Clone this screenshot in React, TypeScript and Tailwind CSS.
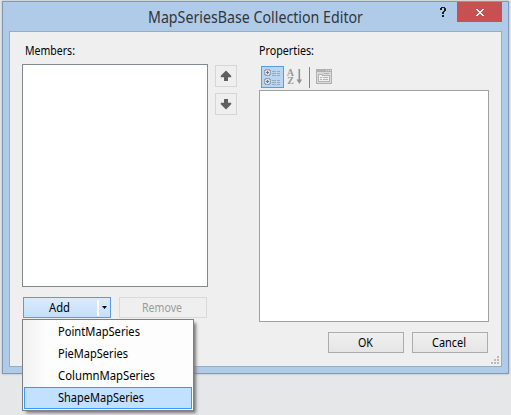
import type { ReactNode } from "react";

const seriesTypes = ["PointMapSeries", "PieMapSeries", "ColumnMapSeries", "ShapeMapSeries"];
const widths = [82, 70, 97, 86];

function Label({ text, width, size = 12 }: { text: string; width: number; size?: number }) {
  return (
    <svg width={width} height={size + 6} className="block shrink-0 overflow-visible" aria-label={text}>
      <text x="0" y={size} fontSize={size} textLength={width} lengthAdjust="spacingAndGlyphs" fill="currentColor">
        {text}
      </text>
    </svg>
  );
}

function ArrowButton({ down = false }: { down?: boolean }) {
  return (
    <button className="flex h-[22px] w-[22px] items-center justify-center border border-[#d6d6d6] bg-[#efefef]">
      <svg width="12" height="12" viewBox="0 0 12 12" fill="#606060" className={down ? "rotate-180" : ""}>
        <path d="M6 0.5 L11.2 5.7 V7.2 H8 V11 H4 V7.2 H0.8 V5.7 Z" />
      </svg>
    </button>
  );
}

function DialogButton({ children }: { children: ReactNode }) {
  return (
    <button className="flex h-[21px] w-[76px] items-center justify-center border border-[#acacac] bg-linear-to-b from-[#f0f0f0] to-[#e5e5e5] pr-[2px]">
      {children}
    </button>
  );
}

function CategoryIcon() {
  return (
    <svg width="17" height="16" viewBox="0 0 17 16" fill="none" shapeRendering="crispEdges">
      <path d="M1.5 .5h4v1h1v4h-1v1h-4v-1h-1v-4h1zM1.5 9.5h4v1h1v4h-1v1h-4v-1h-1v-4h1z" stroke="#93a4b5" fill="#d3e0ec" />
      <path d="M2 3.5h3M3.5 2v3M2 12.5h3M3.5 11v3" stroke="#647585" />
      <path d="M8 2.5h4M8 4.5h4M8 6.5h4M8 11.5h4M8 13.5h4M8 15.5h4M13 2.5h3M13 4.5h3M13 6.5h3M13 11.5h3M13 13.5h3M13 15.5h3" stroke="#96aabd" />
    </svg>
  );
}

function SortIcon() {
  return (
    <svg width="16" height="17" viewBox="0 0 16 17" fill="#999">
      <text x="-0.2" y="7.2" fontSize="10" fontWeight="bold" fontFamily="Liberation Serif, serif">A</text>
      <text x="0.2" y="15.2" fontSize="10" fontWeight="bold" fontFamily="Liberation Serif, serif">Z</text>
      <path d="M11.5 0h1.6v10.5h2L12.3 15 9.5 10.5h2z" fill="#919191" />
    </svg>
  );
}

function PagesIcon() {
  return (
    <svg width="16" height="15" viewBox="0 0 16 15" fill="none" shapeRendering="crispEdges">
      <path d="M.5 .5h15v14H.5z" stroke="#b0b0b0" fill="#d9d9d9" />
      <path d="M1 1.5h14M1 2.5h14" stroke="#b0b0b0" />
      <path d="M10 1.5h1M12 1.5h1M14 1.5h1" stroke="#e4e4e4" />
      <path d="M2.5 5.5h4v1h7v6h-11z" fill="#f0f0f0" stroke="#b5b5b5" />
      <path d="M8 4.5h5M4 8.5h2M7 8.5h5M4 10.5h2M7 10.5h5" stroke="#b5b5b5" />
    </svg>
  );
}

export default function App() {
  return (
    <div className="h-[415px] w-[511px] overflow-hidden bg-[#e6e7e8] pt-px pl-[2px] font-['Noto_Sans','Open_Sans',sans-serif] text-black">
      <div className="h-[373px] w-[507px] border border-[#8299b5] bg-[#b0cbe8] px-[6px] shadow-[0_0_2px_#aaa]">
        <header className="flex h-[29px]">
          <div className="flex w-[370px] items-start justify-end pr-[16px] pt-[5px] text-[#32363b]">
            <Label text="MapSeriesBase Collection Editor" width={215} size={16} />
          </div>
          <div className="flex w-[78px] justify-end pr-[11px] pt-[5px]">
            <svg width="6" height="10" viewBox="0 0 6 10" fill="#1d2023" shapeRendering="crispEdges">
              <path d="M1 0h4v1h1v3H5v1H4v2H2V5h1V4h1V1H2v2H0V1h1zM2 8h2v2H2z" />
            </svg>
          </div>
          <button className="flex h-[20px] w-[45px] items-center justify-center bg-[#c75050] pt-px pl-px">
            <svg width="8" height="7" viewBox="0 0 8 7" fill="white" shapeRendering="crispEdges">
              <path d="M0 0h2v1h1v1h2V1h1V0h2v1H7v1H6v1H5v1h1v1h1v1h1v1H6V6H5V5H3v1H2v1H0V6h1V5h1V4h1V3H2V2H1V1H0z" />
            </svg>
          </button>
        </header>
        <main className="h-[336px] w-[493px] border border-[#96adc8] bg-[#efefef]">
          <div className="flex h-[290px] pl-[12px]">
            <section className="w-[186px]">
              <div className="h-[32px] pt-[11px] pl-[3px]"><Label text="Members:" width={50} /></div>
              <div className="h-[223px] border border-[#828790] bg-white" />
              <div className="flex justify-between pt-[10px] pr-px pl-px">
                <div className="relative">
                  <button className="flex h-[21px] w-[88px] border border-[#569de5] bg-linear-to-b from-[#dcebfc] to-[#c4dffc]">
                    <span className="flex h-full w-[73px] items-center justify-center pt-[3px] pr-[2px]"><Label text="Add" width={21} /></span>
                    <span className="mt-[2px] h-[16px] w-[2px] bg-white" />
                    <svg width="5" height="3" viewBox="0 0 5 3" className="mt-[8px] ml-[3px]"><path d="M0 0h5L2.5 3z" /></svg>
                  </button>
                  <div className="absolute top-[22px] left-[-1px] h-[92px] w-[172px] border border-[#808080] bg-[#fdfdfd] bg-linear-to-r from-[#f1f1f1] to-[#fdfdfd] to-[24px] p-px shadow-[3px_3px_3px_-1px_#777]">
                    {seriesTypes.map((name, index) => (
                      <div key={name} className={index === 3 ? "flex h-[22px] items-center border border-[#3399ff] bg-[#c2e0ff] pl-[33px] pt-[2px]" : "flex h-[22px] items-center pl-[34px] pt-[2px]"}>
                        <Label text={name} width={widths[index]} />
                      </div>
                    ))}
                  </div>
                </div>
                <button className="flex h-[21px] w-[88px] items-center justify-center border border-[#d9d9d9] bg-[#efefef] pt-[3px] pr-[2px] text-[#9b9b9b]"><Label text="Remove" width={40} /></button>
              </div>
            </section>
            <section className="ml-[7px] flex w-[22px] flex-col gap-[6px] pt-[33px]"><ArrowButton /><ArrowButton down /></section>
            <section className="ml-[22px] w-[230px]">
              <div className="h-[34px] pt-[11px]"><Label text="Properties:" width={55} /></div>
              <div className="flex h-[24px] pl-[2px]">
                <button className="flex h-[22px] w-[23px] items-center justify-center border border-[#569de5] bg-[#b8d6f2]"><CategoryIcon /></button>
                <div className="ml-[3px] pt-[3px]"><SortIcon /></div>
                <div className="ml-[6px] mt-px h-[21px] w-px bg-[#858585]" />
                <div className="ml-[6px] pt-[3px]"><PagesIcon /></div>
              </div>
              <div className="h-[232px] border border-[#a0a0a0] bg-white" />
            </section>
          </div>
          <footer className="flex h-[44px] pl-[318px] pt-[10px]">
            <DialogButton><div className="pt-[3px]"><Label text="OK" width={15} /></div></DialogButton>
            <div className="ml-[8px]"><DialogButton><div className="pt-[3px]"><Label text="Cancel" width={34} /></div></DialogButton></div>
            <svg width="8" height="8" viewBox="0 0 8 8" fill="#bababa" className="mt-[24px] ml-[3px]"><path d="M6 0h2v2H6zM3 3h2v2H3zM6 3h2v2H6zM0 6h2v2H0zM3 6h2v2H3zM6 6h2v2H6z" /></svg>
          </footer>
        </main>
      </div>
    </div>
  );
}
